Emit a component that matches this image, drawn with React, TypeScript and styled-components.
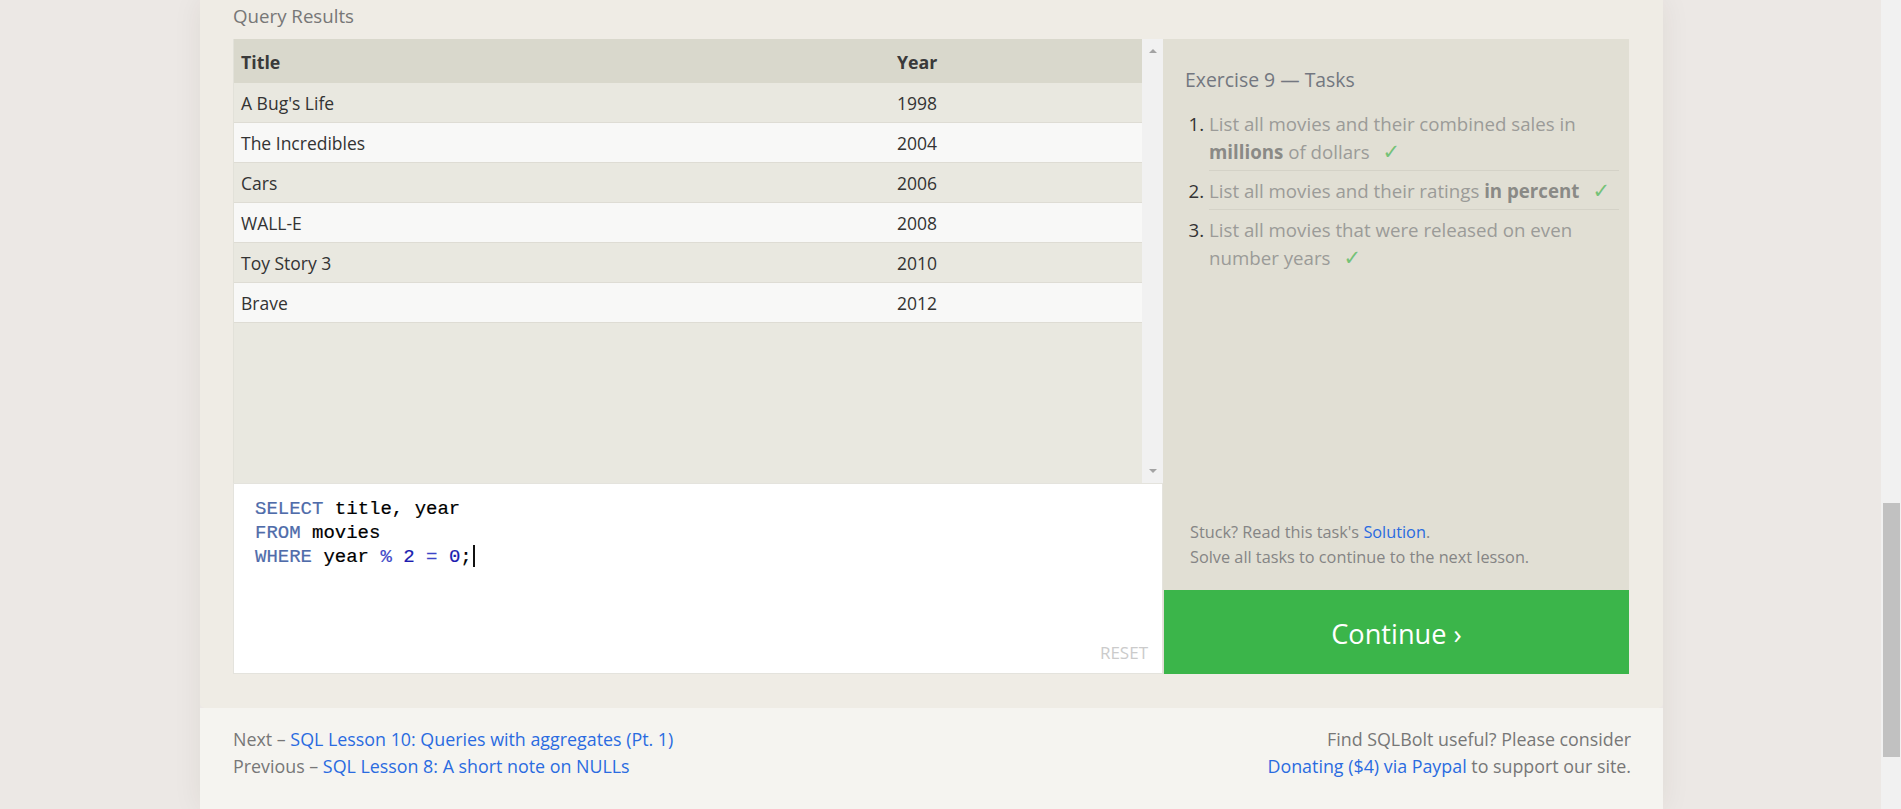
import React from 'react';
import styled, { createGlobalStyle } from 'styled-components';

const GlobalStyle = createGlobalStyle`
  html, body {
    margin: 0;
    padding: 0;
    background: #ece8e5;
    overflow: hidden;
  }
  body {
    font-family: "Open Sans", "Liberation Sans", sans-serif;
    color: #333;
  }
`;

const Page = styled.div`
  width: 1881px;
  height: 809px;
  display: flex;
`;

const Card = styled.div`
  margin-left: 200px;
  width: 1463px;
  height: 809px;
  display: flex;
  flex-direction: column;
  box-shadow: 0 0 28px rgba(60, 40, 30, 0.07);
`;

const MainSection = styled.section`
  background: #efece5;
  padding: 4px 34px 34px 33px;
  border-radius: 0 0 5px 5px;
`;

const SectionTitle = styled.div`
  font-size: 18.7px;
  line-height: 24px;
  color: #777;
  margin-bottom: 11px;
`;

const Exercise = styled.div`
  display: grid;
  grid-template-columns: 930px 466px;
  height: 635px;
`;

const LeftCol = styled.div`
  display: flex;
  flex-direction: column;
`;

const Results = styled.div`
  height: 444px;
  display: flex;
  background: #e9e8e0;
  border-left: 1px solid #e2e1d9;
`;

const TableWrap = styled.div`
  flex: 1;
`;

const Table = styled.table`
  width: 100%;
  border-collapse: collapse;
  font-size: 17.5px;
`;

const HeadCell = styled.th`
  height: 44px;
  padding: 2px 7px 0;
  text-align: left;
  background: #d9d8cc;
  font-weight: 700;
  font-size: 17.8px;
  color: #3a3a3a;
  box-sizing: border-box;
`;

const Row = styled.tr<{ $even: boolean }>`
  background: ${(p) => (p.$even ? '#f8f8f7' : '#e9e8e0')};
  border-bottom: 1px solid #dedcd4;
`;

const Cell = styled.td`
  height: 39px;
  padding: 0 7px;
  color: #333;
`;

const ScrollTrack = styled.div`
  width: 21px;
  background: #f1f1f1;
  display: flex;
  flex-direction: column;
  justify-content: space-between;
  align-items: center;
  padding: 10px 0;
  box-sizing: border-box;
`;

const Arrow = styled.div<{ $down?: boolean }>`
  width: 0;
  height: 0;
  border-left: 4px solid transparent;
  border-right: 4px solid transparent;
  ${(p) =>
    p.$down ? 'border-top: 4px solid #a3a3a3;' : 'border-bottom: 4px solid #a3a3a3;'}
`;

const Editor = styled.div`
  height: 191px;
  box-sizing: border-box;
  background: #fff;
  border: 1px solid #e4e3dd;
  padding: 13px 14px 10px 21px;
  display: flex;
  flex-direction: column;
`;

const CodeLine = styled.div`
  font-family: "Liberation Mono", "DejaVu Sans Mono", monospace;
  font-size: 19px;
  line-height: 24px;
  white-space: pre;
  color: #000;
  -webkit-text-stroke: 0.2px #000;
`;

const Keyword = styled.span`
  color: #4f6caa;
  -webkit-text-stroke: 0.2px #4f6caa;
`;

const Op = styled.span`
  color: #3d46c8;
  -webkit-text-stroke: 0.2px #3d46c8;
`;

const Num = styled.span`
  color: #1c1cb0;
  -webkit-text-stroke: 0.2px #1c1cb0;
`;

const Caret = styled.span`
  display: inline-block;
  width: 2px;
  height: 22px;
  background: #111;
  vertical-align: -5px;
  margin-left: 1px;
`;

const Reset = styled.div`
  margin-top: auto;
  align-self: flex-end;
  font-size: 17px;
  line-height: 20px;
  color: #cbcbcb;
`;

const RightPanel = styled.div`
  background: #e1dfd4;
  display: flex;
  flex-direction: column;
`;

const TaskBody = styled.div`
  padding: 27px 10px 0 22px;
`;

const TaskTitle = styled.div`
  font-size: 19.4px;
  line-height: 28px;
  color: #737780;
`;

const TaskList = styled.ol`
  margin: 10px 0 0;
  padding-left: 24px;
`;

const TaskItem = styled.li<{ $last?: boolean }>`
  font-size: 18.7px;
  line-height: 28px;
  color: #333;
  padding: 6px 0 4px;
  border-bottom: ${(p) => (p.$last ? 'none' : '1px solid #d4d2c7')};
`;

const TaskText = styled.span`
  color: #9b9b98;

  b {
    color: #8a8a86;
    font-weight: 700;
  }
`;

const Check = styled.span`
  display: inline-block;
  color: #74c278;
  margin-left: 13px;
  font-family: "DejaVu Sans", sans-serif;
  font-size: 21px;
  line-height: 20px;
`;

const Hint = styled.div`
  margin-top: auto;
  padding: 0 10px 20px 27px;
  font-size: 16.3px;
  line-height: 25px;
  color: #858585;
`;

const Link = styled.a`
  color: #2a6be0;
  text-decoration: none;
`;

const ContinueButton = styled.div`
  height: 84px;
  margin-left: 1px;
  background: #3bb54a;
  color: #fff;
  font-size: 27.2px;
  display: flex;
  align-items: center;
  justify-content: center;
  padding-top: 3px;
  box-sizing: border-box;
`;

const Footer = styled.footer`
  flex: 1;
  background: #f5f4f0;
  padding: 18px 32px 0 33px;
  display: flex;
  justify-content: space-between;
  font-size: 17.85px;
  line-height: 26.5px;
  color: #777;
`;

const FooterRight = styled.div`
  text-align: right;
`;

const PageScrollbar = styled.div`
  position: fixed;
  top: 0;
  right: 0;
  width: 20px;
  height: 809px;
  background: #f1f1f1;
`;

const Thumb = styled.div`
  position: absolute;
  top: 503px;
  left: 2px;
  width: 17px;
  height: 254px;
  background: #c1c1c1;
`;

const movies = [
  ["A Bug's Life", 1998],
  ['The Incredibles', 2004],
  ['Cars', 2006],
  ['WALL-E', 2008],
  ['Toy Story 3', 2010],
  ['Brave', 2012],
] as const;

export default function App() {
  return (
    <>
      <GlobalStyle />
      <Page>
        <Card>
          <MainSection>
            <SectionTitle>Query Results</SectionTitle>
            <Exercise>
              <LeftCol>
                <Results>
                  <TableWrap>
                    <Table>
                      <thead>
                        <tr>
                          <HeadCell style={{ width: 656 }}>Title</HeadCell>
                          <HeadCell>Year</HeadCell>
                        </tr>
                      </thead>
                      <tbody>
                        {movies.map(([title, year], i) => (
                          <Row key={title} $even={i % 2 === 1}>
                            <Cell>{title}</Cell>
                            <Cell>{year}</Cell>
                          </Row>
                        ))}
                      </tbody>
                    </Table>
                  </TableWrap>
                  <ScrollTrack>
                    <Arrow />
                    <Arrow $down />
                  </ScrollTrack>
                </Results>
                <Editor>
                  <CodeLine>
                    <Keyword>SELECT</Keyword> title, year
                  </CodeLine>
                  <CodeLine>
                    <Keyword>FROM</Keyword> movies
                  </CodeLine>
                  <CodeLine>
                    <Keyword>WHERE</Keyword> year <Op>%</Op> <Num>2</Num> <Op>=</Op> <Num>0</Num>;
                    <Caret />
                  </CodeLine>
                  <Reset>RESET</Reset>
                </Editor>
              </LeftCol>
              <RightPanel>
                <TaskBody>
                  <TaskTitle>Exercise 9 — Tasks</TaskTitle>
                  <TaskList>
                    <TaskItem>
                      <TaskText>
                        List all movies and their combined sales in <b>millions</b> of dollars
                      </TaskText>
                      <Check>✓</Check>
                    </TaskItem>
                    <TaskItem>
                      <TaskText>
                        List all movies and their ratings <b>in percent</b>
                      </TaskText>
                      <Check>✓</Check>
                    </TaskItem>
                    <TaskItem $last>
                      <TaskText>List all movies that were released on even number years</TaskText>
                      <Check>✓</Check>
                    </TaskItem>
                  </TaskList>
                </TaskBody>
                <Hint>
                  Stuck? Read this task's <Link>Solution</Link>.
                  <br />
                  Solve all tasks to continue to the next lesson.
                </Hint>
                <ContinueButton>Continue ›</ContinueButton>
              </RightPanel>
            </Exercise>
          </MainSection>
          <Footer>
            <div>
              Next – <Link>SQL Lesson 10: Queries with aggregates (Pt. 1)</Link>
              <br />
              Previous – <Link>SQL Lesson 8: A short note on NULLs</Link>
            </div>
            <FooterRight>
              Find SQLBolt useful? Please consider
              <br />
              <Link>Donating ($4) via Paypal</Link> to support our site.
            </FooterRight>
          </Footer>
        </Card>
      </Page>
      <PageScrollbar>
        <Thumb />
      </PageScrollbar>
    </>
  );
}
